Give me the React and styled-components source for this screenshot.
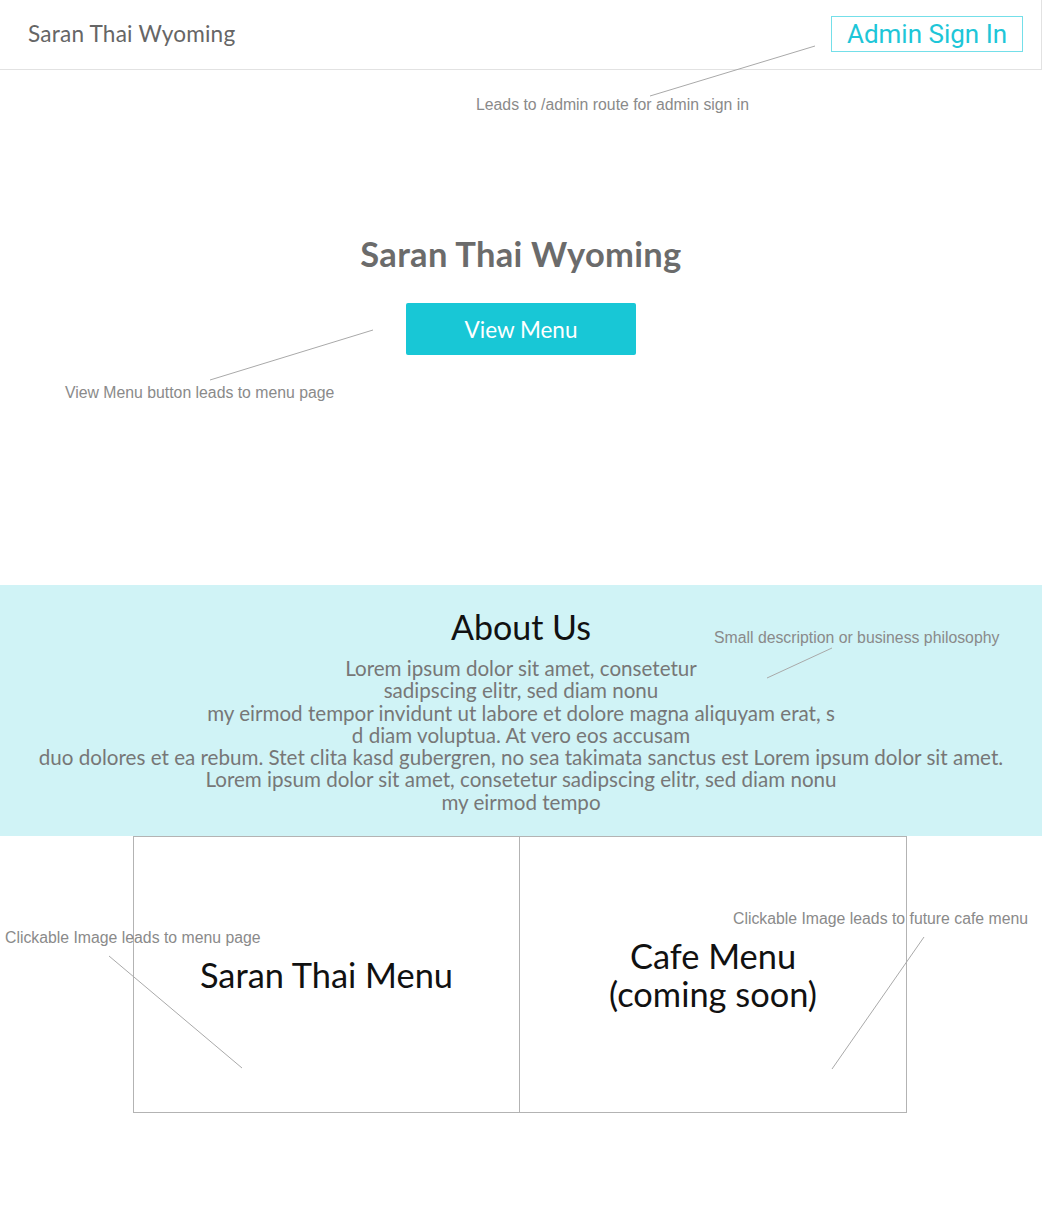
import React from "react";
import styled, { createGlobalStyle } from "styled-components";

const GlobalStyle = createGlobalStyle`
  html, body {
    margin: 0;
    padding: 0;
    background: #ffffff;
  }
  * {
    box-sizing: border-box;
  }
`;

const display = `"Lato", "Open Sans", sans-serif`;
const note = `"Liberation Sans", Arial, sans-serif`;

const Page = styled.div`
  position: relative;
  width: 1042px;
  min-height: 1218px;
  font-family: ${display};
`;

const Header = styled.header`
  height: 70px;
  display: flex;
  align-items: center;
  justify-content: space-between;
  padding: 0 18px 0 28px;
  border-bottom: 1px solid #e2e2e2;
  border-right: 1px solid #e2e2e2;
`;

const Brand = styled.div`
  font-size: 22.6px;
  color: #666;
  letter-spacing: 0.2px;
  padding-bottom: 3px;
`;

const AdminButton = styled.button`
  height: 36px;
  width: 192px;
  margin-bottom: 2px;
  background: #fff;
  border: 1px solid #74dfe9;
  color: #1ec6d8;
  font-family: Roboto, "Liberation Sans", sans-serif;
  font-size: 26px;
  font-weight: 400;
  padding: 0;
  cursor: pointer;
`;

const Hero = styled.section`
  height: 515px;
  display: flex;
  flex-direction: column;
  align-items: center;
  padding-top: 164px;
`;

const HeroTitle = styled.h1`
  margin: 0;
  font-size: 34.5px;
  font-weight: 700;
  color: #6b6b6b;
  letter-spacing: 0.3px;
  line-height: 40px;
`;

const PrimaryButton = styled.button`
  margin-top: 29px;
  width: 230px;
  height: 52px;
  border: none;
  border-radius: 2px;
  background: #18c7d6;
  color: #fff;
  font-family: ${display};
  font-size: 22.5px;
  cursor: pointer;
`;

const About = styled.section`
  height: 251px;
  background: #d0f3f6;
  display: flex;
  flex-direction: column;
  align-items: center;
  padding-top: 22px;
`;

const AboutTitle = styled.h2`
  margin: 0;
  font-size: 34px;
  font-weight: 400;
  color: #111;
  line-height: 40px;
`;

const AboutText = styled.p`
  margin: 10px 0 0;
  text-align: center;
  font-size: 20.6px;
  line-height: 22.3px;
  color: #777;
  white-space: nowrap;
`;

const Cards = styled.div`
  display: grid;
  grid-template-columns: 387px 387px;
  width: 774px;
  margin-left: 133px;
  height: 277px;
`;

const Card = styled.a`
  display: flex;
  align-items: center;
  justify-content: center;
  text-align: center;
  border: 1px solid #b3b3b3;
  border-left-width: ${(p) => (p.$joined ? "0" : "1px")};
  color: #111;
  text-decoration: none;
  font-size: 34.4px;
  line-height: 38px;
  cursor: pointer;
`;

const Note = styled.span`
  position: absolute;
  font-family: ${note};
  font-size: 15.8px;
  color: #8a8a8a;
  white-space: nowrap;
  line-height: 18px;
`;

const Leaders = styled.svg`
  position: absolute;
  left: 0;
  top: 0;
  pointer-events: none;
`;

const lines = [
  [650, 96, 815, 46],
  [210, 380, 373, 330],
  [767, 678, 832, 648],
  [109, 956, 242, 1068],
  [924, 937, 832, 1069],
];

const notes = [
  { x: 476, y: 96, text: "Leads to /admin route for admin sign in" },
  { x: 65, y: 384, text: "View Menu button leads to menu page" },
  { x: 714, y: 629, text: "Small description or business philosophy" },
  { x: 5, y: 929, text: "Clickable Image leads to menu page" },
  { x: 733, y: 910, text: "Clickable Image leads to future cafe menu" },
];

export default function App() {
  return (
    <Page>
      <GlobalStyle />
      <Header>
        <Brand>Saran Thai Wyoming</Brand>
        <AdminButton>Admin Sign In</AdminButton>
      </Header>

      <Hero>
        <HeroTitle>Saran Thai Wyoming</HeroTitle>
        <PrimaryButton>View Menu</PrimaryButton>
      </Hero>

      <About>
        <AboutTitle>About Us</AboutTitle>
        <AboutText>
          Lorem ipsum dolor sit amet, consetetur
          <br />
          sadipscing elitr, sed diam nonu
          <br />
          my eirmod tempor invidunt ut labore et dolore magna aliquyam erat, s
          <br />
          d diam voluptua. At vero eos accusam
          <br />
          duo dolores et ea rebum. Stet clita kasd gubergren, no sea takimata
          sanctus est Lorem ipsum dolor sit amet.
          <br />
          Lorem ipsum dolor sit amet, consetetur sadipscing elitr, sed diam nonu
          <br />
          my eirmod tempo
        </AboutText>
      </About>

      <Cards>
        <Card>Saran Thai Menu</Card>
        <Card $joined>
          Cafe Menu
          <br />
          (coming soon)
        </Card>
      </Cards>

      {notes.map((n) => (
        <Note key={n.text} style={{ left: n.x, top: n.y }}>
          {n.text}
        </Note>
      ))}

      <Leaders width="1042" height="1218">
        {lines.map(([x1, y1, x2, y2], i) => (
          <line
            key={i}
            x1={x1}
            y1={y1}
            x2={x2}
            y2={y2}
            stroke="#a9a9a9"
            strokeWidth="1"
          />
        ))}
      </Leaders>
    </Page>
  );
}
